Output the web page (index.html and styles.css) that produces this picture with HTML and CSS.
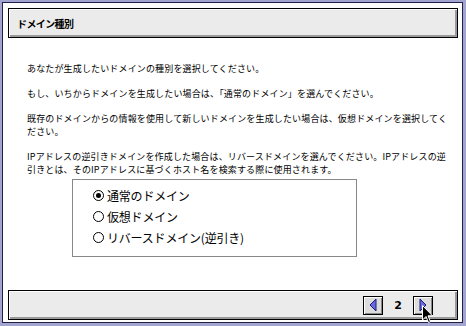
FILE: index.html
```html
<!DOCTYPE html>
<html lang="ja">
<head>
<meta charset="utf-8">
<link rel="stylesheet" href="styles.css">
</head>
<body>
<div class="frame">
  <div class="panel header"><span class="title">ドメイン種別</span></div>
  <div class="content">
    <p class="para">あなたが生成したいドメインの種別を選択してください。</p>
    <p class="para">もし、いちからドメインを生成したい場合は、「通常のドメイン」を選んでください。</p>
    <p class="para"><span class="ln">既存のドメインからの情報を使用して新しいドメインを生成したい場合は、仮想ドメインを選択してく</span><span class="ln">ださい。</span></p>
    <p class="para last"><span class="ln">IPアドレスの逆引きドメインを作成した場合は、リバースドメインを選んでください。IPアドレスの逆</span><span class="ln">引きとは、そのIPアドレスに基づくホスト名を検索する際に使用されます。</span></p>
    <div class="group">
      <div class="radio-row"><span class="radio checked"></span><span class="label">通常のドメイン</span></div>
      <div class="radio-row"><span class="radio"></span><span class="label">仮想ドメイン</span></div>
      <div class="radio-row"><span class="radio"></span><span class="label">リバースドメイン(逆引き)</span></div>
    </div>
  </div>
  <div class="panel footer">
    <span class="nav-btn"><svg width="8" height="12" viewBox="0 0 8 12"><path d="M7 0 L7 12 L1 6 Z" fill="#6a6ae0" stroke="#1a1a70" stroke-width="1"/></svg></span>
    <span class="page">2</span>
    <span class="nav-btn"><svg width="8" height="12" viewBox="0 0 8 12"><path d="M1 0 L1 12 L7 6 Z" fill="#6a6ae0" stroke="#1a1a70" stroke-width="1"/></svg></span>
  </div>
  <svg class="cursor" width="12" height="19" viewBox="0 0 12 19"><path d="M0.5 0.5 L0.5 15 L4 11.5 L6.5 17.5 L8.5 16.7 L6 10.8 L10.5 10.8 Z" fill="#000" stroke="#fff" stroke-width="1"/></svg>
</div>
</body>
</html>
```

FILE: styles.css
```css
html, body {
  margin: 0;
  padding: 0;
}
body {
  width: 466px;
  height: 326px;
  background: #a4a4d0;
  overflow: hidden;
  font-family: "Noto Sans CJK JP", "Noto Sans", sans-serif;
  color: #000;
}
.frame {
  position: relative;
  box-sizing: border-box;
  margin: 2px 3px 3px 2px;
  width: 461px;
  height: 321px;
  border: 1px solid #202048;
  background: #fff;
  padding: 5px 4px 2px 5px;
  display: flex;
  flex-direction: column;
}
.panel {
  box-sizing: border-box;
  height: 30px;
  flex: none;
  border: 1px solid #000;
  background: #ebebeb;
  box-shadow: inset 1px 1px 0 #fff, inset -2px -2px 0 #9a9a9a;
  display: flex;
  align-items: center;
}
.title {
  font-size: 10px;
  font-weight: bold;
  padding-left: 8px;
  letter-spacing: -0.6px;
}
.content {
  flex: 1;
  padding: 24px 0 0 19px;
}
.para {
  margin: 0 0 12px;
  font-size: 9px;
  line-height: 13px;
  letter-spacing: 0.15px;
  white-space: nowrap;
}
.para.last {
  margin-bottom: 0;
}
.ln {
  display: block;
  height: 13px;
}
.group {
  margin: 3px 0 0 45px;
  width: 285px;
  height: 78px;
  box-sizing: border-box;
  border: 1px solid #888;
  padding: 5px 0 0 20px;
}
.radio-row {
  display: flex;
  align-items: center;
  height: 21px;
}
.radio {
  box-sizing: border-box;
  width: 11px;
  height: 11px;
  border: 1px solid #000;
  border-radius: 50%;
  margin-right: 3px;
  position: relative;
}
.radio.checked::after {
  content: "";
  position: absolute;
  left: 2px;
  top: 2px;
  width: 5px;
  height: 5px;
  border-radius: 50%;
  background: #000;
}
.label {
  font-size: 12px;
  line-height: 16px;
  letter-spacing: -0.2px;
}
.footer {
  justify-content: flex-end;
  padding-right: 24px;
  margin-top: auto;
}
.nav-btn {
  box-sizing: border-box;
  width: 20px;
  height: 19px;
  border: 1px solid #000;
  background: #dcdcdc;
  box-shadow: inset 1px 1px 0 #fff, inset -1px -1px 0 #888;
  display: flex;
  align-items: center;
  justify-content: center;
}
.page {
  font-family: "DejaVu Sans", sans-serif;
  font-size: 11px;
  font-weight: bold;
  width: 30px;
  text-align: center;
}
.cursor {
  position: absolute;
  left: 419px;
  top: 302px;
}
```
